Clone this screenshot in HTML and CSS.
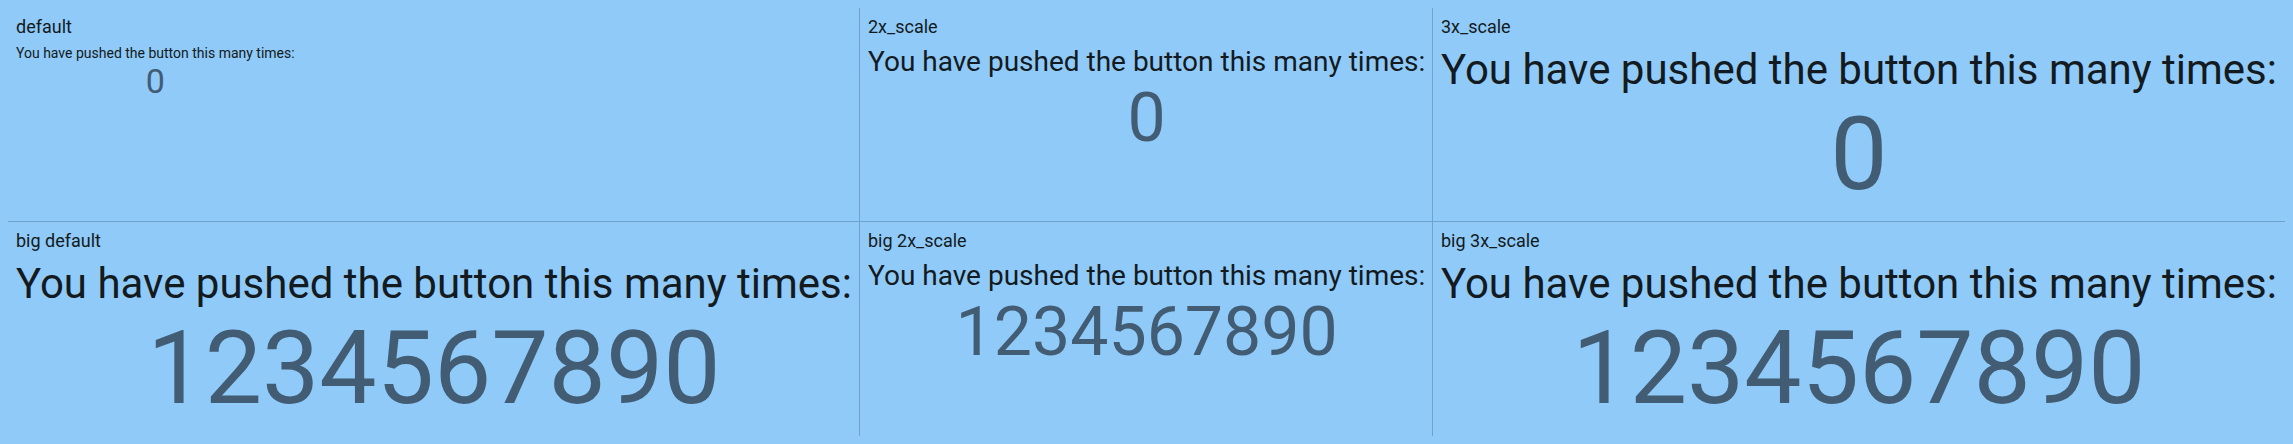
FILE: index.html
```html
<!DOCTYPE html>
<html>
<head>
<meta charset="utf-8">
<link rel="stylesheet" href="styles.css">
</head>
<body>
<div class="grid">
  <section class="panel">
    <div class="label">default</div>
    <div class="counter s1">
      <div class="msg">You have pushed the button this many times:</div>
      <div class="num">0</div>
    </div>
  </section>
  <section class="panel">
    <div class="label">2x_scale</div>
    <div class="counter s2">
      <div class="msg">You have pushed the button this many times:</div>
      <div class="num">0</div>
    </div>
  </section>
  <section class="panel">
    <div class="label">3x_scale</div>
    <div class="counter s3">
      <div class="msg">You have pushed the button this many times:</div>
      <div class="num">0</div>
    </div>
  </section>
  <section class="panel">
    <div class="label">big default</div>
    <div class="counter s3">
      <div class="msg">You have pushed the button this many times:</div>
      <div class="num">1234567890</div>
    </div>
  </section>
  <section class="panel">
    <div class="label">big 2x_scale</div>
    <div class="counter s2">
      <div class="msg">You have pushed the button this many times:</div>
      <div class="num">1234567890</div>
    </div>
  </section>
  <section class="panel">
    <div class="label">big 3x_scale</div>
    <div class="counter s3">
      <div class="msg">You have pushed the button this many times:</div>
      <div class="num">1234567890</div>
    </div>
  </section>
</div>
</body>
</html>
```
FILE: styles.css
```css
html {
  background: #90caf9;
}
body {
  margin: 8px;
  font-family: Roboto, "Liberation Sans", sans-serif;
  color: #131a20;
}
.grid {
  display: grid;
  grid-template-columns: 851px 572px 852px;
  grid-template-rows: 213px 214px;
  gap: 1px;
  background: #70a2cc;
  width: 2277px;
  height: 428px;
}
.panel {
  background: #90caf9;
  padding: 8px;
  display: flex;
  flex-direction: column;
  align-items: flex-start;
  gap: 8px;
  overflow: visible;
  min-width: 0;
}
.label {
  font-size: 18px;
  line-height: normal;
  white-space: nowrap;
}
.counter {
  display: flex;
  flex-direction: column;
  align-items: center;
  white-space: nowrap;
}
.msg {
  line-height: normal;
}
.num {
  line-height: normal;
  color: #425d73;
}
.s1 .msg { font-size: 14px; }
.s1 .num { font-size: 34px; }
.s2 .msg { font-size: 28px; }
.s2 .num { font-size: 68px; }
.s3 .msg { font-size: 42px; }
.s3 .num { font-size: 102px; }
```
